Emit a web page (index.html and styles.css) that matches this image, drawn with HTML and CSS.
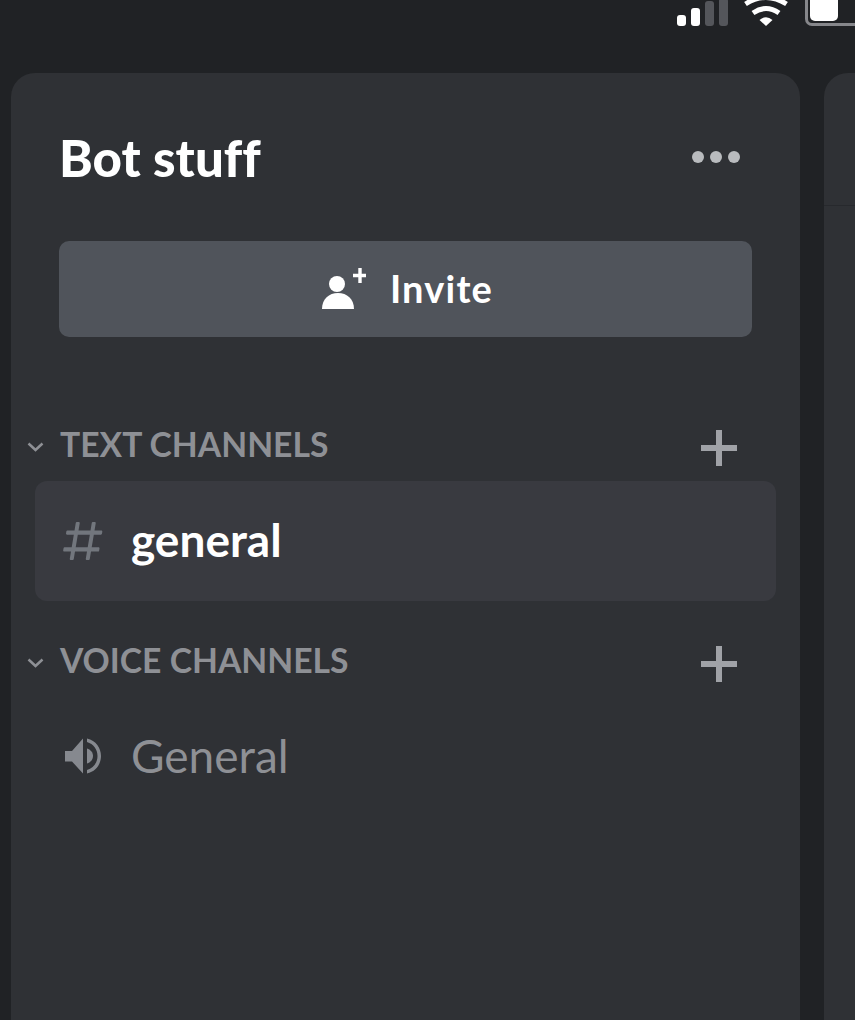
FILE: index.html
```html
<!DOCTYPE html>
<html lang="en">
<head>
  <meta charset="UTF-8" />
  <meta name="viewport" content="width=device-width, initial-scale=1.0" />
  <title>Bot stuff</title>
  <link rel="stylesheet" href="styles.css">
</head>
<body>
  <div class="status-bar">
    <div class="signal">
      <span class="bar bar-1"></span>
      <span class="bar bar-2"></span>
      <span class="bar bar-3"></span>
      <span class="bar bar-4"></span>
    </div>
    <svg class="wifi" width="46" height="26" viewBox="0 0 46 26">
      <path class="wifi-fill" d="M23 26L16.5 20Q23 14.5 29.5 20Z" />
      <path class="wifi-arc" d="M10 13Q23 4 36 13" />
      <path class="wifi-arc" d="M2.5 4Q23 -9 43.5 4" />
    </svg>
    <div class="battery"><span class="battery-level"></span></div>
  </div>

  <div class="columns">
    <div class="panel">
      <div class="panel-head">
        <h1>Bot stuff</h1>
        <div class="dots"><span></span><span></span><span></span></div>
      </div>

      <button class="invite">
        <svg width="44" height="43" viewBox="0 0 44 43">
          <circle class="white" cx="15" cy="16" r="8" />
          <path class="white" d="M0 41C0 31 7 25 16 25C25 25 32 31 32 41Z" />
          <path class="white" d="M36.3 0H39.7V5.8H44V9.2H39.7V15H36.3V9.2H31V5.8H36.3Z" />
        </svg>
        <span class="invite-label">Invite</span>
      </button>

      <div class="section section-text">
        <svg class="chevron" width="17" height="10" viewBox="0 0 17 10"><path d="M1.5 1.5L8.5 8L15.5 1.5" /></svg>
        <span class="section-name">TEXT CHANNELS</span>
        <span class="plus"></span>
      </div>
      <div class="channel active">
        <svg class="channel-icon" width="40" height="38" viewBox="2 3 20 18" preserveAspectRatio="none">
          <path class="hash" fill-rule="evenodd" d="M5.88657 21C5.57547 21 5.3399 20.7189 5.39427 20.4126L6.00001 17H2.59511C2.28449 17 2.04905 16.7198 2.10259 16.4138L2.27759 15.4138C2.31946 15.1746 2.52722 15 2.77011 15H6.35001L7.41001 9H4.00511C3.69449 9 3.45905 8.71977 3.51259 8.41381L3.68759 7.41381C3.72946 7.17456 3.93722 7 4.18011 7H7.76001L8.39677 3.41262C8.43914 3.17391 8.64664 3 8.88907 3H9.87344C10.1845 3 10.4201 3.28107 10.3657 3.58738L9.76001 7H15.76L16.3968 3.41262C16.4391 3.17391 16.6466 3 16.8891 3H17.8734C18.1845 3 18.4201 3.28107 18.3657 3.58738L17.76 7H21.1649C21.4755 7 21.711 7.28023 21.6574 7.58619L21.4824 8.58619C21.4406 8.82544 21.2328 9 20.9899 9H17.41L16.35 15H19.7549C20.0655 15 20.301 15.2802 20.2474 15.5862L20.0724 16.5862C20.0306 16.8254 19.8228 17 19.5799 17H16L15.3632 20.5874C15.3209 20.8261 15.1134 21 14.8709 21H13.8866C13.5755 21 13.3399 20.7189 13.3943 20.4126L14 17H8.00001L7.36325 20.5874C7.32088 20.8261 7.11337 21 6.87094 21H5.88657ZM9.41045 9L8.35045 15H14.3504L15.4104 9H9.41045Z" />
        </svg>
        <span class="channel-name">general</span>
      </div>

      <div class="section section-voice">
        <svg class="chevron" width="17" height="10" viewBox="0 0 17 10"><path d="M1.5 1.5L8.5 8L15.5 1.5" /></svg>
        <span class="section-name">VOICE CHANNELS</span>
        <span class="plus"></span>
      </div>
      <div class="channel">
        <svg class="channel-icon" width="40" height="38" viewBox="0 0 40 38">
          <path class="speaker" d="M2 13H9L20 0.5V35.5L9 23.5H2Z" />
          <path class="speaker" d="M24 0.5C33 2.5 38 10 38 18C38 26 33 33.5 24 35.5V32C30.5 30 34.5 24.5 34.5 18C34.5 11.5 30.5 6 24 4Z" />
          <path class="speaker" d="M24 10.5C27.5 11.5 30 14.5 30 18C30 21.5 27.5 24.5 24 25.5Z" />
        </svg>
        <span class="channel-name">General</span>
      </div>
    </div>

    <div class="side-panel">
      <div class="side-head"></div>
    </div>
  </div>
</body>
</html>
```

FILE: styles.css
```css
* { box-sizing: border-box; }
html, body { height: 1020px; }
body {
  margin: 0;
  overflow: hidden;
  font-family: Lato, "Open Sans", sans-serif;
  background: #202225;
  color: #fff;
}

.status-bar {
  display: flex;
  align-items: flex-end;
  height: 26px;
  margin-bottom: 47px;
  padding-left: 677px;
  overflow: hidden;
}

.signal {
  display: flex;
  align-items: flex-end;
  gap: 5px;
  height: 26px;
}

.bar {
  width: 9px;
  border-radius: 3px;
  background: #fff;
}
.bar-1 { height: 11px; }
.bar-2 { height: 18px; }
.bar-3 { height: 25px; background: #54565b; }
.bar-4 { height: 28px; background: #54565b; }

.wifi {
  flex: none;
  margin-left: 15px;
}
.wifi-fill { fill: #fff; }
.wifi-arc {
  fill: none;
  stroke: #fff;
  stroke-width: 5;
}

.battery {
  display: flex;
  align-items: flex-end;
  flex: none;
  width: 80px;
  height: 40px;
  margin-left: 16px;
  padding: 0 0 2px 2px;
  border: 3px solid #86878b;
  border-radius: 7px;
}
.battery-level {
  width: 28px;
  height: 30px;
  border-radius: 5px;
  background: #fff;
}

.columns {
  display: flex;
  gap: 24px;
  padding-left: 11px;
}

.panel {
  flex: none;
  width: 789px;
  height: 947px;
  background: #2f3135;
  border-radius: 24px 24px 0 0;
}

.panel-head {
  display: flex;
  align-items: center;
  justify-content: space-between;
  height: 168px;
  padding: 0 60px 0 48px;
}

h1 {
  margin: 0;
  font-size: 51px;
  font-weight: 900;
  letter-spacing: 0.05px;
}

.dots {
  display: flex;
  gap: 6px;
}
.dots span {
  width: 12px;
  height: 12px;
  border-radius: 50%;
  background: #b9bbbe;
}

.invite {
  display: flex;
  align-items: center;
  justify-content: center;
  gap: 24px;
  width: 693px;
  height: 96px;
  margin-left: 48px;
  padding: 0 0 0 4px;
  border: none;
  border-radius: 10px;
  background: #50545b;
  color: #fff;
  font-family: inherit;
  font-size: 38px;
  font-weight: 700;
  letter-spacing: 1.2px;
}
.invite-label { margin-bottom: 2px; }
.white { fill: #fff; }

.section {
  display: flex;
  align-items: center;
  gap: 16px;
  height: 44px;
  padding: 0 63px 0 16px;
}
.section-text { margin-top: 88px; }
.section-voice { margin-top: 40px; }

.chevron path {
  fill: none;
  stroke: #8e9095;
  stroke-width: 2.5;
}

.section-name {
  flex: 1;
  margin-bottom: 6px;
  color: #8e9095;
  font-size: 33.7px;
  font-weight: 700;
}

.plus {
  position: relative;
  flex: none;
  width: 36px;
  height: 36px;
  margin-top: 2px;
}
.plus::before,
.plus::after {
  content: "";
  position: absolute;
  background: #a0a2a7;
}
.plus::before { left: 15px; top: 0; width: 6px; height: 36px; }
.plus::after { left: 0; top: 15px; width: 36px; height: 6px; }

.channel {
  display: flex;
  align-items: center;
  gap: 28px;
  height: 120px;
  margin: 12px 24px 0;
  padding-left: 28px;
  border-radius: 12px;
  color: #8e9095;
  font-size: 46px;
}
.channel-name { margin-bottom: 3px; }
.channel.active {
  background: #393a40;
  color: #fff;
  font-weight: 700;
}
.channel-icon { flex: none; }
.hash { fill: #72767d; }
.speaker { fill: #86898f; }

.side-panel {
  flex: 1;
  height: 947px;
  background: #2f3135;
  border-radius: 24px 0 0 0;
}
.side-head {
  height: 133px;
  border-bottom: 1px solid #27292d;
}
```
